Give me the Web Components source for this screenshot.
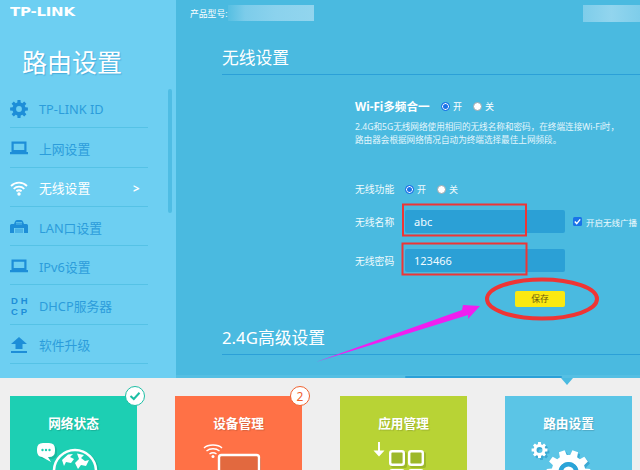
<!DOCTYPE html>
<html lang="zh">
<head>
<meta charset="utf-8">
<title>路由设置</title>
<style>
  html, body { margin: 0; padding: 0; width: 640px; height: 470px; overflow: hidden; background: #efefef; }
  body { font-family: "Noto Sans", "Noto Sans CJK SC", sans-serif; position: relative; }
</style>
</head>
<body>
<router-app></router-app>
<script>
const FONT = '"Noto Sans", "Noto Sans CJK SC", sans-serif';

// builds a gear outline, used by the menu and the tile icons
function gearPath(cx, cy, outer, inner, hole, teeth) {
  const pts = [];
  const step = Math.PI * 2 / teeth;
  for (let i = 0; i < teeth; i++) {
    const a = i * step;
    [[-0.34, inner], [-0.22, outer], [0.22, outer], [0.34, inner]].forEach(([o, r]) => {
      pts.push([cx + r * Math.cos(a + o * step), cy + r * Math.sin(a + o * step)]);
    });
  }
  const d = 'M' + pts.map(p => p[0].toFixed(1) + ' ' + p[1].toFixed(1)).join('L') + 'Z';
  return `${d}M${cx - hole} ${cy}a${hole} ${hole} 0 1 0 ${hole * 2} 0a${hole} ${hole} 0 1 0 ${-hole * 2} 0Z`;
}

const NAV_ICONS = {
  gear: `<svg width="18" height="18" viewBox="0 0 18 18"><path fill="currentColor" fill-rule="evenodd" d="${gearPath(9, 9, 9, 6.6, 2.9, 8)}"/></svg>`,
  laptop: `<svg width="18" height="18" viewBox="0 0 18 18"><path fill="currentColor" fill-rule="evenodd" d="M1.500 2.500H16.500V13H1.500ZM3.700 4.700V11H14.300V4.700ZM0 13H18V15.300H0Z"/></svg>`,
  wifi: `<svg width="18" height="18" viewBox="0 0 18 18"><g fill="none" stroke="currentColor" stroke-width="1.800"><path d="M1 7C5.500 2.600 12.500 2.600 17 7"/><path d="M3.700 9.800C6.800 6.900 11.200 6.900 14.300 9.800"/><path d="M6.400 12.300C8 11 10 11 11.600 12.300"/></g><circle cx="9" cy="15" r="1.700" fill="currentColor"/></svg>`,
  lan: `<svg width="18" height="18" viewBox="0 0 18 18"><path fill="currentColor" d="M5 3.500Q5.500 2 7 2H11Q12.500 2 13 3.500L14 6H16.500Q18 6 18 7.500V15H14V10H4V15H0V7.500Q0 6 1.500 6H4Z"/><rect x="5" y="10.500" width="8" height="4.500" fill="currentColor" opacity=".45"/><path d="M6 4.500H12M6 6H12" stroke="#6dcff2" stroke-width=".7"/></svg>`,
  upload: `<svg width="18" height="18" viewBox="0 0 18 18"><path fill="currentColor" d="M9 1L17 8H12.500V13H5.500V8H1ZM1 15H17V17H1Z"/></svg>`
};

const sharedInput = `
  .radio { display: inline-flex; align-items: center; gap: 3px; }
  .dot { width: 9px; height: 9px; border-radius: 50%; background: #fff; box-sizing: border-box; border: 1px solid #9aa6ad; }
  .on { border: 1px solid #1a73e8; box-shadow: inset 0 0 0 1px #fff; background: #1a73e8; }
`;

class RouterApp extends HTMLElement {
  constructor() {
    super();
    this.attachShadow({ mode: 'open' });
    this.shadowRoot.innerHTML = `
      <style>
        :host { display: block; width: 640px; height: 470px; position: relative; overflow: hidden; font-family: ${FONT}; }
        .top { display: flex; height: 378px; }
      </style>
      <div class="top">
        <router-sidebar></router-sidebar>
        <router-main></router-main>
      </div>
      <router-tiles></router-tiles>
      <router-marks></router-marks>
    `;
  }
}

class RouterSidebar extends HTMLElement {
  constructor() {
    super();
    this.attachShadow({ mode: 'open' });
    this.shadowRoot.innerHTML = `
      <style>
        :host { display: block; width: 176px; height: 378px; flex: none; box-sizing: border-box; background: #6dcff2; position: relative; padding-left: 10px; }
        .logo { height: 25px; color: #fff; font: 700 12.3px/24px "DejaVu Sans", sans-serif; letter-spacing: -0.2px; transform: scaleX(1.22); transform-origin: left center; }
        h1 { margin: 23px 0 13px 12px; height: 28px; font: 400 25px/28px ${FONT}; color: #fff; text-shadow: 1px 1px 1px rgba(30,130,190,.45); }
        .list { width: 138px; }
        .bar { position: absolute; left: 168px; top: 89px; width: 4px; height: 124px; border-radius: 2px; background: #4fbde4; }
      </style>
      <div class="logo">TP-LINK</div>
      <h1>路由设置</h1>
      <div class="list">
        <nav-item icon="gear">TP-LINK ID</nav-item>
        <nav-item icon="laptop">上网设置</nav-item>
        <nav-item icon="wifi" active>无线设置</nav-item>
        <nav-item icon="lan">LAN口设置</nav-item>
        <nav-item icon="laptop">IPv6设置</nav-item>
        <nav-item icon="dhcp">DHCP服务器</nav-item>
        <nav-item icon="upload">软件升级</nav-item>
      </div>
      <div class="bar"></div>
    `;
  }
}

class NavItem extends HTMLElement {
  constructor() {
    super();
    this.attachShadow({ mode: 'open' });
  }
  connectedCallback() {
    const name = this.getAttribute('icon');
    const active = this.hasAttribute('active');
    const icon = name === 'dhcp' ? '<span class="dhcp"><span>DH</span><span>CP</span></span>' : NAV_ICONS[name];
    this.shadowRoot.innerHTML = `
      <style>
        :host { display: flex; align-items: center; box-sizing: border-box; height: 39.3px; padding-top: 2px; border-bottom: 1px solid #55c2e6; color: #2c9ddb; font-size: 12.800px; position: relative; }
        :host([active]) { color: #fff; }
        .icon { width: 29px; height: 18px; flex: none; color: #1d8ed8; display: flex; }
        :host([active]) .icon { color: #fff; }
        .dhcp { display: block; margin-top: -2px; padding-left: 1px; font: 700 9.500px/11px "Liberation Sans", sans-serif; letter-spacing: 3px; color: #1d8ed8; white-space: nowrap; }
        .dhcp span { display: block; height: 11px; }
        .arrow { position: absolute; left: 123px; top: 13px; font-size: 11.500px; font-weight: 700; color: #fff; }
      </style>
      <span class="icon">${icon}</span><span><slot></slot></span>
      ${active ? '<span class="arrow">&gt;</span>' : ''}
    `;
  }
}

class RouterMain extends HTMLElement {
  constructor() {
    super();
    this.attachShadow({ mode: 'open' });
    this.shadowRoot.innerHTML = `
      <style>
        :host { display: block; flex: 1; height: 378px; background: #4abae0; position: relative; overflow: hidden; color: #fff; }
        .head { display: flex; height: 26px; align-items: center; padding-left: 14px; font-size: 8.800px; justify-content: space-between; }
        .head div { display: flex; align-items: center; }
        .blur { height: 16px; width: 86px; background: linear-gradient(90deg, #56bfe2 0, #7cccea 20%, #8bd2ed 55%, #92d5ee 100%); }
        .blur.right { width: 57px; height: 17px; background: linear-gradient(90deg, #7ecdea, #92d5ee 50%, #7ecdea); }
        .body { padding-left: 46px; }
        .form { margin-left: 133px; }
        .wifi { display: flex; align-items: center; margin-top: 21px; height: 20px; }
        .wifi b { font-size: 11.600px; width: 86px; white-space: nowrap; }
        .wifi .radio { margin-right: 11px; font-size: 9px; }
        .desc { margin: 5px 0 0; font-size: 8.600px; line-height: 12.500px; height: 25px; white-space: nowrap; color: #e4f6fc; }
        .strip { position: absolute; left: 229px; top: 376px; width: 157px; height: 2px; background: #2ba0d8; border-radius: 1px; }
        .edge { position: absolute; left: 0; right: 0; top: 375px; height: 3px; background: #55bfe3; }
        ${sharedInput}
      </style>
      <div class="head">
        <div>产品型号:<span class="blur"></span></div>
        <span class="blur right"></span>
      </div>
      <div class="body">
        <section-title style="margin-top:17px">无线设置</section-title>
        <div class="form">
          <div class="wifi">
            <b>Wi-Fi多频合一</b>
            <span class="radio"><i class="dot on"></i>开</span>
            <span class="radio"><i class="dot"></i>关</span>
          </div>
          <p class="desc">2.4G和5G无线网络使用相同的无线名称和密码&#65292;在终端连接Wi-Fi时&#65292;<br>路由器会根据网络情况自动为终端选择最佳上网频段。</p>
          <wifi-form></wifi-form>
        </div>
        <section-title style="margin-top:16px">2.4G高级设置</section-title>
      </div>
      <div class="edge"></div>
      <div class="strip"></div>
    `;
  }
}

class SectionTitle extends HTMLElement {
  constructor() {
    super();
    this.attachShadow({ mode: 'open' });
    this.shadowRoot.innerHTML = `
      <style>
        :host { display: block; height: 32px; box-sizing: border-box; border-bottom: 1px solid #2ba0d8; font-size: 16.800px; line-height: 30px; color: #fff; }
      </style>
      <slot></slot>
    `;
  }
}

class WifiForm extends HTMLElement {
  constructor() {
    super();
    this.attachShadow({ mode: 'open' });
    this.shadowRoot.innerHTML = `
      <style>
        :host { display: block; margin-top: 33px; font-size: 9.800px; color: #f0fafd; }
        .row { display: flex; align-items: center; }
        .label { width: 50px; flex: none; }
        .switch { height: 20px; }
        .switch .radio { margin-right: 11px; font-size: 9px; }
        .field { height: 23px; margin-top: 16px; }
        .switch + .field { margin-top: 11px; }
        .input { width: 160px; height: 23px; background: #2ba0d6; border-radius: 2px; box-sizing: border-box; padding-left: 9px; font-size: 11px; line-height: 23px; color: #f2fbff; }
        .check { display: flex; align-items: center; gap: 4px; margin-left: 8px; font-size: 8.500px; white-space: nowrap; }
        .box { width: 9px; height: 9px; border-radius: 1.500px; background: #1a73e8; display: flex; }
        .save { display: flex; justify-content: flex-end; width: 210px; margin-top: 19px; }
        .btn { width: 50px; height: 16px; border-radius: 2px; background: #fbe911; color: #6a5b12; font-size: 8.800px; line-height: 16px; text-align: center; }
        ${sharedInput}
      </style>
      <div class="row switch">
        <span class="label">无线功能</span>
        <span class="radio"><i class="dot on"></i>开</span>
        <span class="radio"><i class="dot"></i>关</span>
      </div>
      <div class="row field">
        <span class="label">无线名称</span>
        <div class="input">abc</div>
        <div class="check"><span class="box"><svg width="9" height="9" viewBox="0 0 9 9"><path d="M1.800 4.600L3.700 6.600L7.200 2.400" fill="none" stroke="#fff" stroke-width="1.400"/></svg></span>开启无线广播</div>
      </div>
      <div class="row field">
        <span class="label">无线密码</span>
        <div class="input">123466</div>
      </div>
      <div class="save"><div class="btn">保存</div></div>
    `;
  }
}

class RouterTiles extends HTMLElement {
  constructor() {
    super();
    this.attachShadow({ mode: 'open' });
    this.shadowRoot.innerHTML = `
      <style>
        :host { display: flex; gap: 38px; height: 92px; box-sizing: border-box; padding: 18px 0 0 10px; background: #efefef; position: relative; }
        .notch { position: absolute; left: 561px; top: 0; border: 6px solid transparent; border-top: 7px solid #4abae0; border-bottom: 0; }
      </style>
      <router-tile color="#1dcfb3" badge="check" kind="globe">网络状态</router-tile>
      <router-tile color="#ff7146" badge="2" kind="device">设备管理</router-tile>
      <router-tile color="#b8d335" kind="apps">应用管理</router-tile>
      <router-tile color="#5bc5e6" kind="gears">路由设置</router-tile>
      <div class="notch"></div>
    `;
  }
}

const TILE_ICONS = {
  globe: `<svg width="127" height="40" viewBox="0 0 127 40">
    <g fill="#18bb9f"><circle cx="67" cy="29" r="22"/><rect x="29" y="2" width="18" height="14" rx="5"/></g>
    <circle cx="65" cy="28" r="21" fill="#1dcfb3" stroke="#fff" stroke-width="2.500"/>
    <path fill="#fff" d="M52 17L58 11.500L63 11L60 14L64 16L61 20L56 19L54 23ZM67 10.500L74 12L71 15L75 18L79 17L76 23L71 22L68 26L65 20L69 16Z"/>
    <path fill="#fff" d="M27 6Q27 0 33 0H39Q45 0 45 6V8Q45 14 39 14H38L41 19L32 14Q27 13.500 27 8Z"/>
    <g fill="#1dcfb3"><circle cx="32.500" cy="7" r="1.200"/><circle cx="36" cy="7" r="1.200"/><circle cx="39.500" cy="7" r="1.200"/></g>
  </svg>`,
  device: `<svg width="127" height="40" viewBox="0 0 127 40">
    <rect x="46" y="14" width="40" height="30" rx="2" fill="#d9623a"/>
    <rect x="44" y="12" width="40" height="30" rx="2.500" fill="#e2693f" stroke="#fff" stroke-width="2.400"/>
    <g fill="none" stroke="#fff" stroke-width="1.400"><path d="M29 5C33 1 43 1 47 5"/><path d="M31.500 8C35 5 41 5 44.500 8"/><path d="M34.500 11C36.500 9.500 39.500 9.500 41.500 11"/></g>
    <circle cx="38" cy="13.500" r="1.500" fill="#fff"/>
  </svg>`,
  apps: `<svg width="127" height="40" viewBox="0 0 127 40">
    <g fill="#9db82a"><rect x="51" y="9" width="16" height="16" rx="2"/><rect x="70" y="9" width="16" height="16" rx="2"/></g>
    <path fill="#fff" d="M38 -1H40V7.500H44.500L39 13.500L33.500 7.500H38Z"/>
    <g fill="none" stroke="#fff" stroke-width="2.400"><rect x="50.200" y="8.200" width="13.600" height="13.600" rx="2"/><rect x="69.200" y="8.200" width="13.600" height="13.600" rx="2"/><rect x="50.200" y="27.200" width="13.600" height="13.600" rx="2"/><rect x="69.200" y="27.200" width="13.600" height="13.600" rx="2"/></g>
  </svg>`,
  gears: `<svg width="127" height="40" viewBox="0 0 127 40">
    <path fill="#3aa9d4" fill-rule="evenodd" d="${gearPath(36.500, 9, 8, 6, 3, 8)}"/>
    <path fill="#3aa9d4" d="${gearPath(65.500, 31, 22, 17, 0, 10)}"/>
    <path fill="#fff" fill-rule="evenodd" d="${gearPath(34.500, 7, 8, 6, 3, 8)}"/>
    <path fill="#fff" fill-rule="evenodd" d="${gearPath(63.500, 29, 22, 17, 10, 10)}"/>
    <circle cx="63.500" cy="29" r="10" fill="#2ba4d8"/><circle cx="63.500" cy="29" r="5.500" fill="#fff"/>
  </svg>`
};

class RouterTile extends HTMLElement {
  constructor() {
    super();
    this.attachShadow({ mode: 'open' });
  }
  connectedCallback() {
    const badge = this.getAttribute('badge');
    const color = this.getAttribute('color');
    let mark = '';
    if (badge === 'check') {
      mark = `<span class="badge" style="border-color:#1dbfa5"><svg width="12" height="12" viewBox="0 0 12 12"><path d="M1.500 6L4.800 9L10.500 2.800" fill="none" stroke="#1dbfa5" stroke-width="2"/></svg></span>`;
    } else if (badge) {
      mark = `<span class="badge" style="border-color:#f0622f;color:#f0622f">${badge}</span>`;
    }
    this.shadowRoot.innerHTML = `
      <style>
        :host { display: block; width: 127px; height: 74px; flex: none; position: relative; color: #fff; }
        .face { height: 74px; overflow: hidden; text-align: center; }
        .name { font-size: 12.700px; font-weight: 700; line-height: 18px; margin-top: 18px; height: 29px; text-shadow: 1px 1px 1px rgba(0,0,0,.15); }
        svg { display: block; overflow: visible; }
        .badge { position: absolute; left: 115px; top: -10px; width: 20px; height: 20px; box-sizing: border-box; border: 1.500px solid; border-radius: 50%; background: #fff; display: flex; align-items: center; justify-content: center; font-size: 12px; }
      </style>
      <div class="face" style="background:${color}">
        <div class="name"><slot></slot></div>
        ${TILE_ICONS[this.getAttribute('kind')]}
      </div>
      ${mark}
    `;
  }
}

// hand drawn marks that lie over the screenshot
class RouterMarks extends HTMLElement {
  constructor() {
    super();
    this.attachShadow({ mode: 'open' });
    this.shadowRoot.innerHTML = `
      <style>
        :host { position: absolute; left: 0; top: 0; width: 640px; height: 470px; pointer-events: none; }
        svg { display: block; }
      </style>
      <svg width="640" height="470" viewBox="0 0 640 470">
        <g fill="none" stroke="#ee3535">
          <rect x="403" y="204.500" width="123" height="31" stroke-width="2"/>
          <rect x="402.500" y="243.500" width="124" height="31" stroke-width="2"/>
          <ellipse cx="542" cy="299" rx="55" ry="19.500" stroke-width="4"/>
        </g>
        <path fill="#f01ef0" d="M316 362L462 310L463 305L480 306L468 319L468 315Z"/>
      </svg>
    `;
  }
}

customElements.define('router-app', RouterApp);
customElements.define('router-sidebar', RouterSidebar);
customElements.define('nav-item', NavItem);
customElements.define('router-main', RouterMain);
customElements.define('section-title', SectionTitle);
customElements.define('wifi-form', WifiForm);
customElements.define('router-tiles', RouterTiles);
customElements.define('router-tile', RouterTile);
customElements.define('router-marks', RouterMarks);
</script>
</body>
</html>
